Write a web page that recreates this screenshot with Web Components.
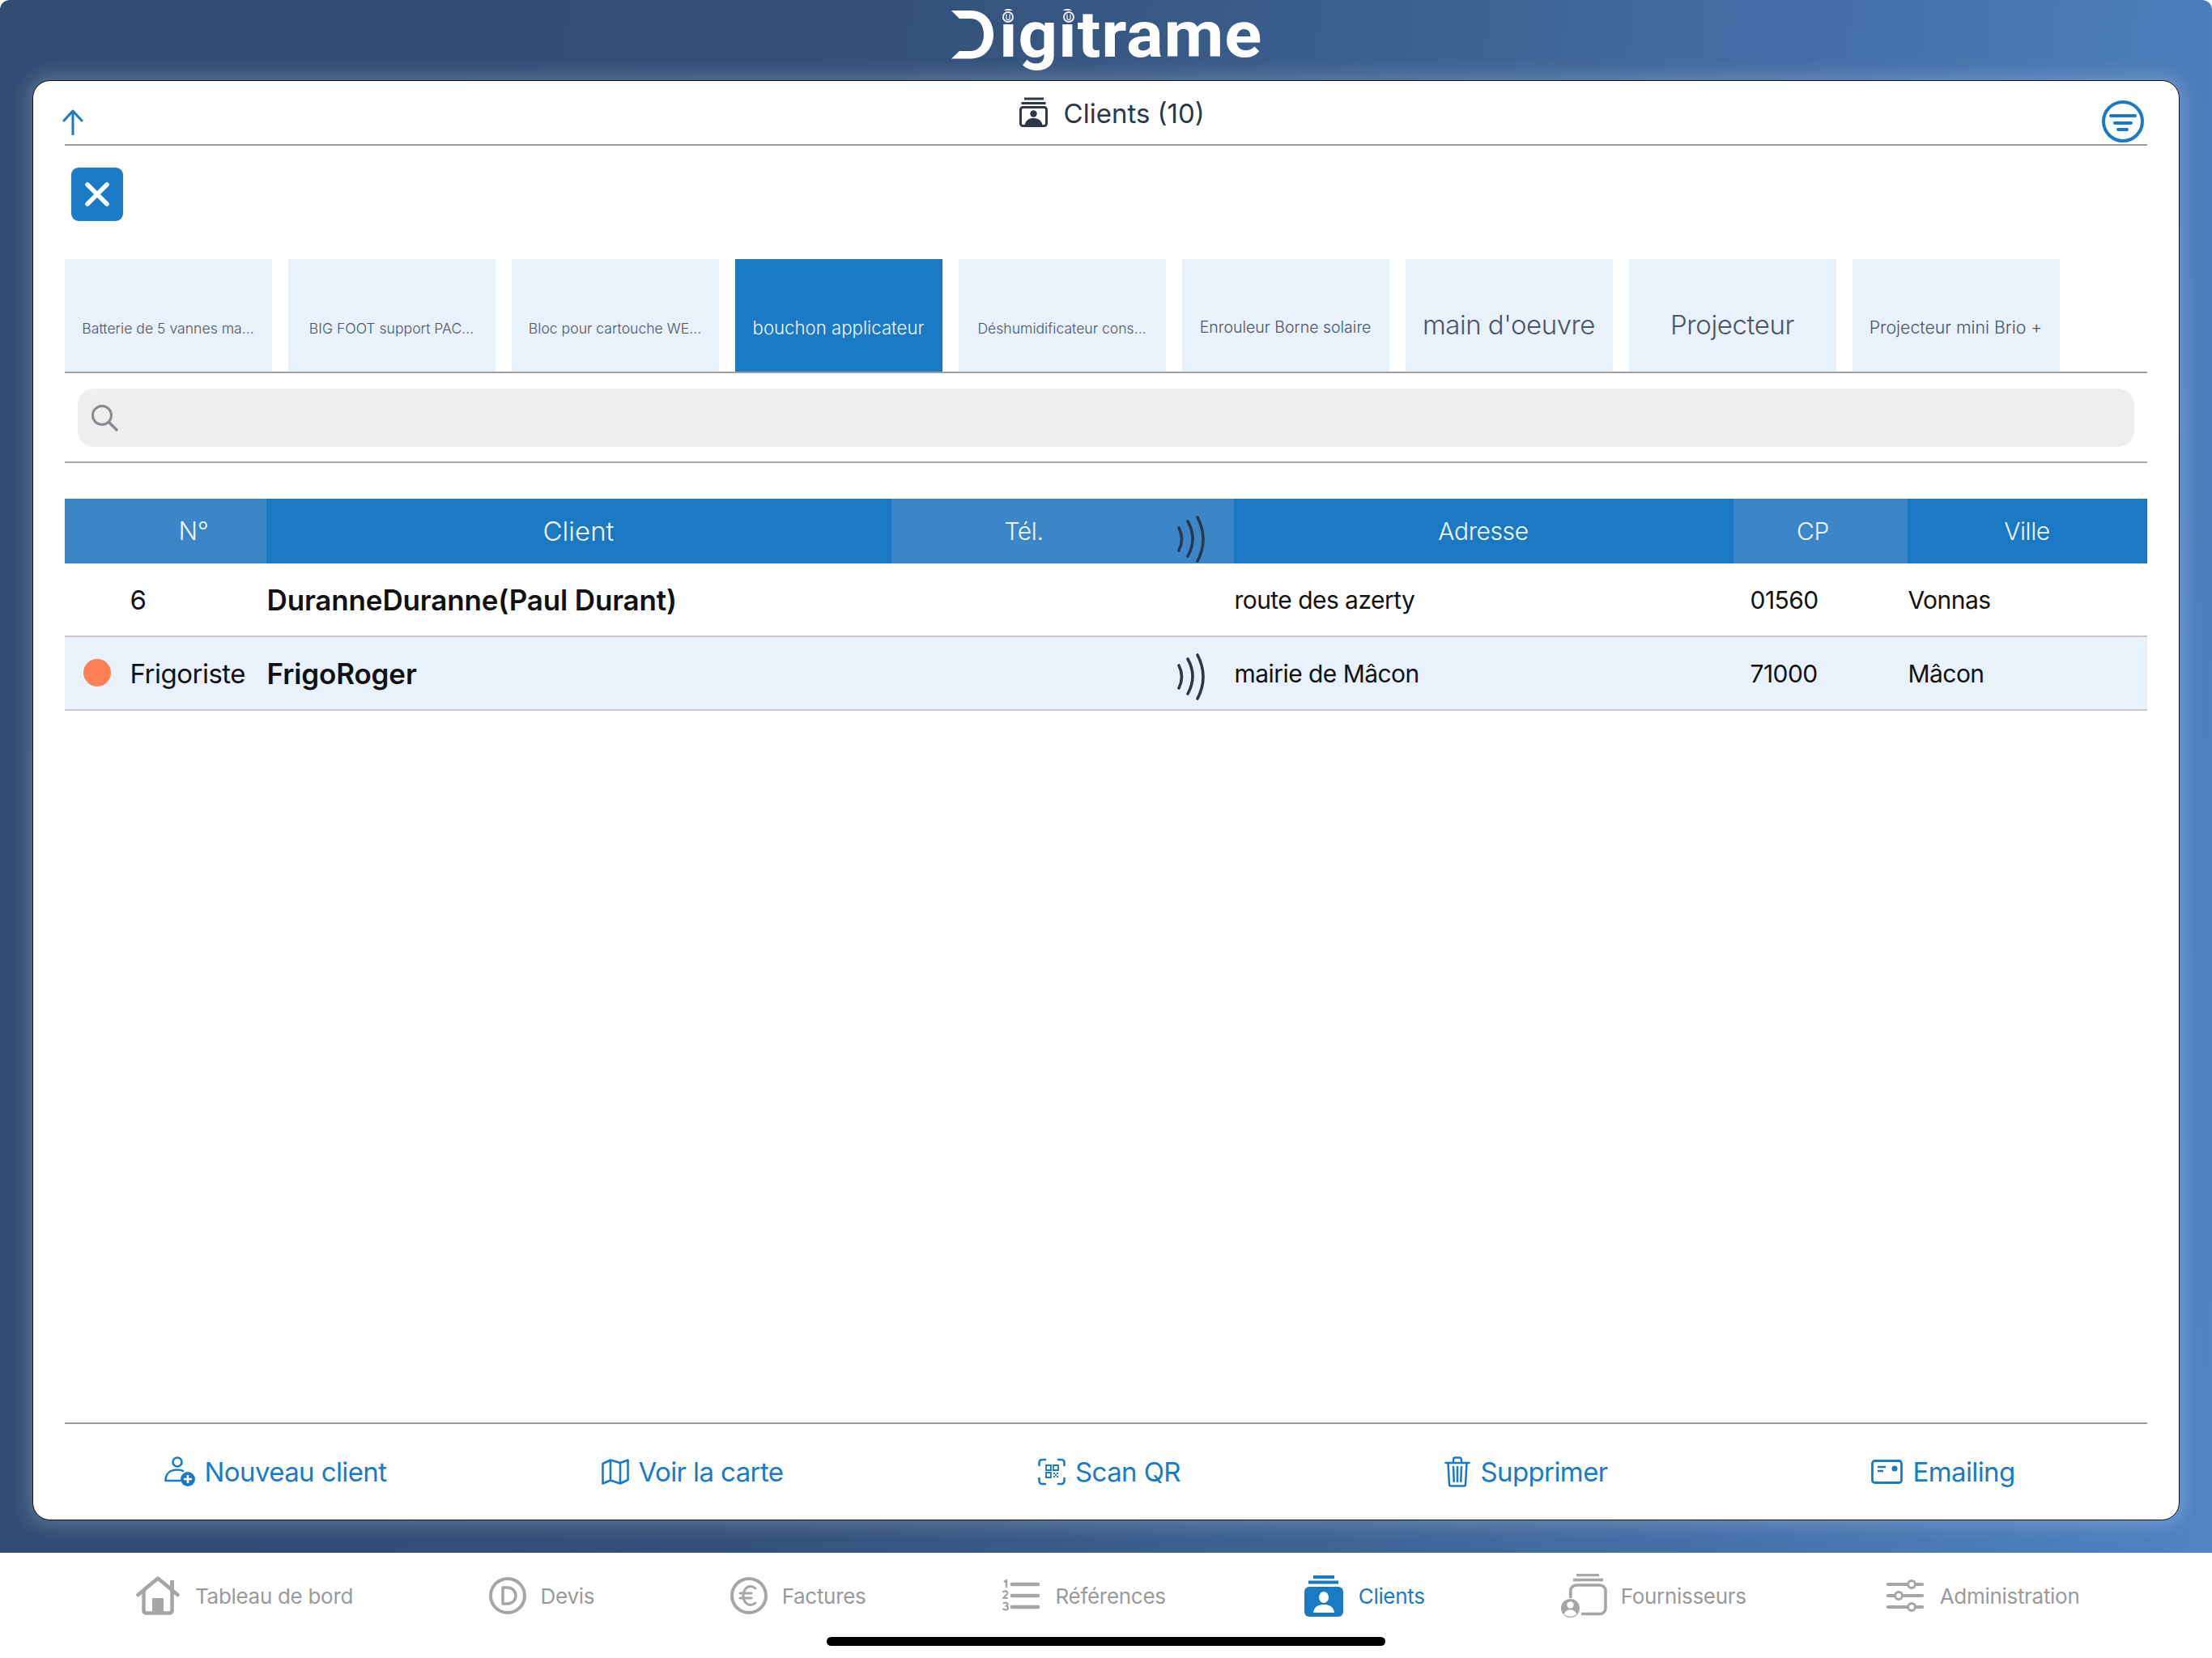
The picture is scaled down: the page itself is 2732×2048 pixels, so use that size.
<!DOCTYPE html>
<html lang="fr"><head><meta charset="utf-8"><title>Digitrame</title>
<style>
html,body{margin:0;padding:0;background:#fff}
body{width:2732px;height:2048px;overflow:hidden;font-family:Inter,"Liberation Sans",sans-serif}
</style></head><body>
<x-app>
  <x-logo slot="logo"></x-logo>
  <x-titlebar slot="head" count="Clients (10)"></x-titlebar>
  <x-closebtn slot="head"></x-closebtn>
  <x-chips slot="head">
    <x-chip style="--fs:17.6px;--dy:74px">Batterie de 5 vannes ma...</x-chip>
    <x-chip style="--fs:17.6px;--dy:74px">BIG FOOT support PAC...</x-chip>
    <x-chip style="--fs:17.6px;--dy:74px">Bloc pour cartouche WE...</x-chip>
    <x-chip active style="--fs:22.2px;--dy:73px">bouchon applicateur</x-chip>
    <x-chip style="--fs:17.6px;--dy:74px">Déshumidificateur cons...</x-chip>
    <x-chip style="--fs:19.500px;--dy:72px">Enrouleur Borne solaire</x-chip>
    <x-chip style="--fs:33px;--dy:69px;--ls:-.5px">main d'oeuvre</x-chip>
    <x-chip style="--fs:33px;--dy:69px;--ls:-.4px">Projecteur</x-chip>
    <x-chip style="--fs:21.300px;--dy:72px">Projecteur mini Brio +</x-chip>
  </x-chips>
  <x-search slot="head"></x-search>
  <x-table slot="body">
    <x-head-row></x-head-row>
    <x-row num="6" name="DuranneDuranne(Paul Durant)" addr="route des azerty" cp="01560" city="Vonnas"></x-row>
    <x-row alt dot signal num="Frigoriste" name="FrigoRoger" addr="mairie de Mâcon" cp="71000" city="Mâcon"></x-row>
  </x-table>
  <x-actions slot="foot">
    <x-action icon="adduser">Nouveau client</x-action>
    <x-action icon="map">Voir la carte</x-action>
    <x-action icon="qr">Scan QR</x-action>
    <x-action icon="trash">Supprimer</x-action>
    <x-action icon="mail">Emailing</x-action>
  </x-actions>
  <x-tabbar slot="tabs">
    <x-tab icon="home" style="--g:19px">Tableau de bord</x-tab>
    <x-tab icon="devis" style="--g:17.500px">Devis</x-tab>
    <x-tab icon="euro" style="--g:17.500px">Factures</x-tab>
    <x-tab icon="refs">Références</x-tab>
    <x-tab icon="clients" active style="--g:19px;--ml:3px">Clients</x-tab>
    <x-tab icon="supply" style="--g:17px">Fournisseurs</x-tab>
    <x-tab icon="admin" style="--ml:5px">Administration</x-tab>
  </x-tabbar>
</x-app>
<script>
const ICONS={
 up:[26,32,'<path d="M13 31V2M2 14 13 2l11 12" fill="none" stroke="currentColor" stroke-width="3" stroke-linecap="round" stroke-linejoin="round"/>'],
 filter:[52,52,'<circle cx="26" cy="26" r="24" fill="none" stroke="currentColor" stroke-width="4"/><path d="M11 19h30M16 28h20M20 36h11" stroke="currentColor" stroke-width="4" stroke-linecap="round"/>'],
 person:[35,37,'<path d="M6 2h24M2.500 7.500h30" stroke="currentColor" stroke-width="3"/><rect x="1.5" y="12.500" width="32" height="23" rx="3" fill="none" stroke="currentColor" stroke-width="3"/><circle cx="17.500" cy="20.5" r="4.2" fill="currentColor"/><path d="M6.500 35c1-7 6-9 11-9s10 2 11 9z" fill="currentColor"/>'],
 close:[30,30,'<path d="M3 3 27 27M27 3 3 27" stroke="#fff" stroke-width="5.500" stroke-linecap="round"/>'],
 search:[34,34,'<circle cx="14" cy="14" r="11.5" fill="none" stroke="#8a8a8e" stroke-width="3"/><path d="M22.5 22.5 32 32" stroke="#8a8a8e" stroke-width="3.4" stroke-linecap="round"/>'],
 signal:[35,58,'<path d="M2 15Q9 29 2 43M13 7Q25 28 13 50M25 2Q39 29 25 56" fill="none" stroke="#2d3748" stroke-width="3.6" stroke-linecap="round"/>'],
 adduser:[38,38,'<circle cx="16" cy="7" r="5.5" fill="none" stroke="currentColor" stroke-width="2.6"/><path d="M1.5 30c0-9 6-13.500 14.500-13.500 3 0 5 .5 7 1.500M1.500 30H20" fill="none" stroke="currentColor" stroke-width="2.6" stroke-linecap="round"/><circle cx="29" cy="28" r="9" fill="currentColor"/><path d="M29 23v10M24 28h10" stroke="#fff" stroke-width="2.600"/>'],
 map:[34,32,'<path d="M1.500 6 11 1.500l12 3.500 9.500-3.500v24.500L23 30.500 11 26.500l-9.500 4zM11 1.500v25M23 5v25" fill="none" stroke="currentColor" stroke-width="2.600" stroke-linejoin="round"/>'],
 qr:[34,34,'<path d="M9 2H5a3.500 3.500 0 0 0-3.500 3.500V9M25 2h4A3.500 3.500 0 0 1 32.500 5.500V9M9 32H5A3.500 3.500 0 0 1 1.500 28.500V25M25 32h4a3.500 3.500 0 0 0 3.500-3.500V25" fill="none" stroke="currentColor" stroke-width="2.600" stroke-linecap="round"/><path d="M10 9h6v6h-6zM19 9h6v6h-6zM10 18h6v6h-6z" fill="none" stroke="currentColor" stroke-width="1.800"/><path d="M19 18h2v2h-2zM23 18h2v2h-2zM21 20h2v2h-2zM19 22h2v2h-2zM23 22h2v2h-2z" fill="currentColor"/>'],
 trash:[32,38,'<path d="M1.500 8h29M11 8V4a2.500 2.500 0 0 1 2.500-2.500h5A2.500 2.500 0 0 1 21 4v4M4.500 8l1.500 26.500a2 2 0 0 0 2 2h16a2 2 0 0 0 2-2L27.500 8M11 13l.7 18M16 13v18M21 13l-.7 18" fill="none" stroke="currentColor" stroke-width="2.500" stroke-linecap="round"/>'],
 mail:[39,30,'<rect x="1.500" y="1.500" width="36" height="27" rx="3" fill="none" stroke="currentColor" stroke-width="2.800"/><path d="M8 9h10M8 14h7" stroke="currentColor" stroke-width="2.600"/><circle cx="29" cy="11" r="3.500" fill="currentColor"/>'],
 home:[54,48,'<path d="M2.500 23 27 2.500 51.500 23" fill="none" stroke="currentColor" stroke-width="4.500" stroke-linecap="round" stroke-linejoin="round"/><path d="M44.500 5v13" stroke="currentColor" stroke-width="5"/><path d="M9.500 17v25.500a3 3 0 0 0 3 3h29a3 3 0 0 0 3-3V17" fill="none" stroke="currentColor" stroke-width="4.500"/><rect x="20" y="27" width="14" height="18" fill="currentColor"/>'],
 devis:[46,46,'<circle cx="23" cy="23" r="21" fill="none" stroke="currentColor" stroke-width="4"/><path d="M17 13h6a10 10 0 0 1 0 20h-6z" fill="none" stroke="currentColor" stroke-width="3.500" stroke-linejoin="round"/>'],
 euro:[46,46,'<circle cx="23" cy="23" r="21" fill="none" stroke="currentColor" stroke-width="4"/><path d="M31 14c-2-2-4-2.500-6-2.500-5 0-9 4.500-9 11.500s4 11.500 9 11.500c2 0 4-.5 6-2.500M12 20h14M12 26h14" fill="none" stroke="currentColor" stroke-width="3" stroke-linecap="round"/>'],
 refs:[46,40,'<path d="M13 6h33M13 20h33M13 34h33" stroke="currentColor" stroke-width="4.400" stroke-linecap="round" transform="translate(-1 0) scale(.98 1)"/><path d="M2 3l3-2v9" fill="none" stroke="currentColor" stroke-width="2.400"/><path d="M.8 16c1-2.500 6-2 5.500 1 0 2-3 3-5 6h5.500" fill="none" stroke="currentColor" stroke-width="2.200"/><path d="M1 30c1-2 5.500-2 5.500.6 0 1.800-2.500 2-3 2 1 0 3.500.4 3.500 2.400 0 3-5 3-6.500 1" fill="none" stroke="currentColor" stroke-width="2.200"/>'],
 clients:[48,51,'<path d="M11 2h26M5 8.500h37" stroke="currentColor" stroke-width="4"/><rect y="14" width="48" height="37" rx="6" fill="currentColor"/><ellipse cx="24" cy="27" rx="6" ry="7" fill="#fff"/><path d="M11 46c1-8 7-10 13-10s12 2 13 10z" fill="#fff"/>'],
 supply:[57,54,'<path d="M19 1.500h28M15 7.500h37" stroke="currentColor" stroke-width="3.400"/><path d="M11.800 30V21a7 7 0 0 1 7-7H48a7 7 0 0 1 7 7v21.500a7 7 0 0 1-7 7H25" fill="none" stroke="currentColor" stroke-width="3.600"/><circle cx="11.500" cy="42.500" r="11.500" fill="currentColor"/><circle cx="11.500" cy="38.500" r="4.200" fill="#fff"/><path d="M3.800 50c1-4 4-5.500 7.700-5.500s6.700 1.500 7.700 5.500a11.500 11.500 0 0 1-15.400 0z" fill="#fff"/>'],
 admin:[46,40,'<path d="M2 6h24M36 6h8M2 20h8M20 20h24M2 34h24M36 34h8" stroke="currentColor" stroke-width="4.200" stroke-linecap="round"/><circle cx="31" cy="6" r="4.500" fill="none" stroke="currentColor" stroke-width="3"/><circle cx="15" cy="20" r="4.500" fill="none" stroke="currentColor" stroke-width="3"/><circle cx="31" cy="34" r="4.500" fill="none" stroke="currentColor" stroke-width="3"/>']
};
const svg=(n,cls='')=>{const [w,h,b]=ICONS[n];return `<svg class="${cls}" width="${w}" height="${h}" viewBox="0 0 ${w} ${h}" aria-hidden="true">${b}</svg>`};
function def(name,css,html){
  customElements.define(name,class extends HTMLElement{
    constructor(){super();this.attachShadow({mode:'open'})}
    connectedCallback(){this.shadowRoot.innerHTML=`<style>${css}</style>`+(typeof html==='function'?html(this):html)}
  });
}
const COLS='249px 772px 423px 617px 215px 296px';
def('x-app',`
:host{display:flex;flex-direction:column;width:2732px;height:2048px;position:relative}
.back{height:1918px;box-sizing:border-box;padding:0 40px;display:flex;flex-direction:column;border-radius:12px 12px 0 0;
 background:linear-gradient(96deg,#304e74 0%,#325078 36%,#3f6698 66%,#4f83c4 100%)}
.top{height:99px;flex:none;display:flex;justify-content:center}
.card{height:1779px;flex:none;box-sizing:border-box;background:#fff;border:1.5px solid #111;border-radius:22px;box-shadow:0 0 22px 6px rgba(255,255,255,.2);
 display:flex;flex-direction:column;padding:0 39px 0 38.5px}
.head{flex:none}.body{flex:1;min-height:0}.foot{flex:none}
.ind{position:absolute;left:1021px;top:2022px;width:690px;height:11px;border-radius:6px;background:#000}
`,`<div class="back"><div class="top"><slot name="logo"></slot></div>
<div class="card"><div class="head"><slot name="head"></slot></div><div class="body"><slot name="body"></slot></div><div class="foot"><slot name="foot"></slot></div></div></div>
<slot name="tabs"></slot><div class="ind"></div>`);
def('x-logo',`
:host{display:block;position:relative;height:99px;width:388px;margin-left:6px;font-family:Roboto,sans-serif}
.t{position:absolute;left:0;top:0;font-size:79px;line-height:86px;font-weight:700;color:#fff;white-space:nowrap;letter-spacing:.8px;transform:scaleX(1.08);transform-origin:0 0}
.d{color:transparent;display:inline-block;width:54.600px;letter-spacing:0}
svg{position:absolute;left:0;top:0;overflow:visible}
`,`<div class="t"><span class="d">D</span>igitrame</div>
<svg width="400" height="99" viewBox="0 0 400 99" aria-hidden="true">
<path d="M0 13H24C42 13 52 27 52 42.500S42 72.500 24 72.500H0L10 63H24C35 63 40 53 40 42.500S35 23 24 23H10Z" fill="#fff"/>
<g fill="#34557f"><rect x="60" y="13" width="20" height="17"/><rect x="135" y="13" width="20" height="17"/></g>
<g fill="none" stroke="#e9eff6"><circle cx="70" cy="21" r="6" stroke-width="2"/><path d="M68 17.500v5a2 2 0 0 0 4 0v-5" stroke-width="1.300"/><circle cx="145" cy="21" r="6" stroke-width="2"/><path d="M143 17.500v5a2 2 0 0 0 4 0v-5" stroke-width="1.300"/></g>
</svg>`);
def('x-titlebar',`
:host{display:flex;box-sizing:border-box;height:79.5px;border-bottom:2px solid #9a9a9a;position:relative;justify-content:center;padding:19.500px 0 0 0;color:#2d3748}
.c{display:flex;align-items:flex-start;gap:20px;font-size:33px;line-height:40px;margin-left:15px}
.up{position:absolute;left:-3px;top:34.500px;color:#1a7ac4}
.f{position:absolute;right:4px;top:23.500px;color:#1a7ac4}
`,h=>`<div class="up">${svg('up')}</div><div class="c">${svg('person')}<span>${h.getAttribute('count')}</span></div><div class="f">${svg('filter')}</div>`);
def('x-closebtn',`
:host{display:flex;align-items:center;justify-content:center;width:64px;height:66px;margin:27px 0 47px 8px;background:#1a7ac4;border-radius:9px}
`,svg('close'));
def('x-chips',`:host{display:flex;gap:20px;height:141px;box-sizing:border-box;border-bottom:2px solid #a0a0a0}`,`<slot></slot>`);
def('x-chip',`
:host{display:flex;flex:none;width:256px;height:139px;box-sizing:border-box;background:#e9f1fb;color:#4a5568;justify-content:center;padding-top:var(--dy,74px);white-space:nowrap;font-size:var(--fs,18px);letter-spacing:var(--ls,0);font-weight:300}
:host([active]){background:#1a7ac4;color:#f0f6fc}
span{display:block;line-height:24px}
`,`<span><slot></slot></span>`);
def('x-search',`
:host{display:block;height:111px;box-sizing:border-box;border-bottom:2px solid #a8a8a8;padding:19px 16px 0 16px}
.b{height:72px;border-radius:20px;background:#eeeef0;display:flex;align-items:center;padding-left:16px}
`,`<div class="b">${svg('search')}</div>`);
def('x-table',`:host{display:block;padding-top:44px}`,`<slot></slot>`);
def('x-head-row',`
:host{display:grid;grid-template-columns:${COLS};height:80px;background:#1b79c4;color:#f2f7fc;font-weight:300;font-size:30px;letter-spacing:-.4px}
div{display:flex;align-items:center;justify-content:center;position:relative}
.l{background:#3a86c9}
.n{padding-left:70px;font-size:31px}.cl{font-size:33px;letter-spacing:0}.t{padding-right:95px}.cp{padding-right:18px}
svg{position:absolute;left:353px;top:21px}
`,`<div class="l n">N°</div><div class="cl">Client</div><div class="l t">Tél.${svg('signal')}</div><div>Adresse</div><div class="l cp">CP</div><div>Ville</div>`);
def('x-row',`
:host{display:grid;grid-template-columns:${COLS};box-sizing:border-box;height:91px;padding-top:2px;border-bottom:2px solid #c6c9d0;color:#111;font-size:30px;letter-spacing:-.55px;align-items:center;position:relative;background:#fff}
:host([alt]){background:#e9f1fb}
.n{padding-left:81px;font-size:33px;letter-spacing:-.5px;position:relative;white-space:nowrap}
.nm{padding-left:1px;font-weight:600;font-size:35px;letter-spacing:-.14px;white-space:nowrap}
.ad{padding-left:1px}
.cp{padding-left:21px}
.ci{padding-left:1px}
.d{position:absolute;left:23px;top:50%;margin-top:-18px;width:34px;height:34px;border-radius:50%;background:#ff7f57}
.tel{position:relative;align-self:center;height:58px}
.tel svg{position:absolute;left:353px;top:4px}
`,h=>`<div class="n">${h.hasAttribute('dot')?'<i class="d"></i>':''}${h.getAttribute('num')}</div><div class="nm">${h.getAttribute('name')}</div><div class="tel">${h.hasAttribute('signal')?svg('signal'):''}</div><div class="ad">${h.getAttribute('addr')}</div><div class="cp">${h.getAttribute('cp')}</div><div class="ci">${h.getAttribute('city')}</div>`);
def('x-actions',`
:host{display:grid;grid-template-columns:repeat(5,515px);justify-content:start;height:120px;box-sizing:border-box;border-top:2px solid #9a9a9a;padding:0 0 0 3px}
`,`<slot></slot>`);
def('x-action',`
:host{display:flex;align-items:center;justify-content:center;gap:12px;color:#1a7ac4;font-size:33px;letter-spacing:-.6px;white-space:nowrap}
`,h=>svg(h.getAttribute('icon'))+`<span><slot></slot></span>`);
def('x-tabbar',`
:host{display:flex;justify-content:flex-start;gap:168px;height:130px;background:#fff;box-sizing:border-box;padding:28px 0 0 168px;align-items:flex-start}
`,`<slot></slot>`);
def('x-tab',`
:host{display:flex;align-items:center;gap:var(--g,20px);height:50px;margin-left:var(--ml,0);color:#a6a6a6;font-size:26px;letter-spacing:-.3px;white-space:nowrap}
span{color:#9a9a9a}
:host([active]){color:#1a7ac4}:host([active]) span{color:#1a7ac4}
`,h=>svg(h.getAttribute('icon'))+`<span><slot></slot></span>`);
</script>
</body></html>
